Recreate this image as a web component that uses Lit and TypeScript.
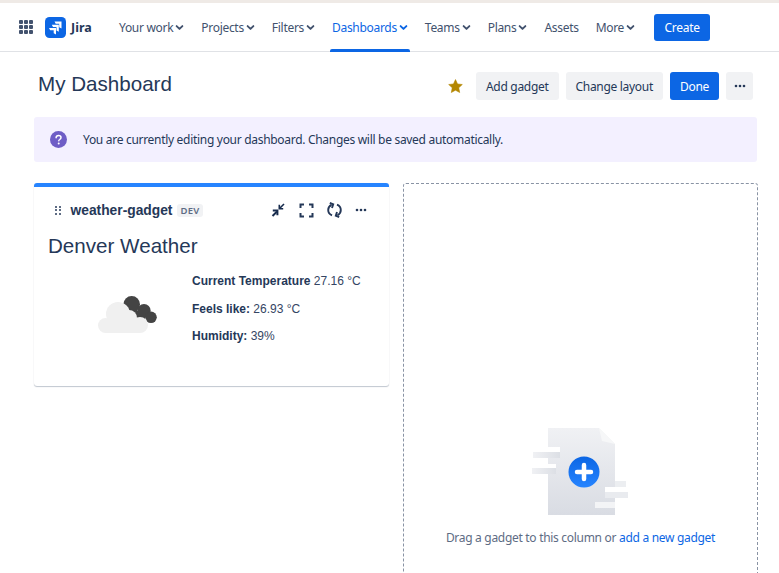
import { LitElement, html, css, svg } from "lit";
import { customElement } from "lit/decorators.js";

const chev = svg`<svg class="chev" width="9" height="9" viewBox="0 0 10 10"><path d="M1.800 3.400 5 6.600l3.200-3.200" fill="none" stroke="currentColor" stroke-width="2.100" stroke-linecap="round" stroke-linejoin="round"/></svg>`;
const dots = svg`<svg width="12" height="4" viewBox="0 0 12 4"><circle cx="2" cy="2" r="1.300" fill="#253858"/><circle cx="6" cy="2" r="1.300" fill="#253858"/><circle cx="10" cy="2" r="1.300" fill="#253858"/></svg>`;

@customElement("app-root")
export class AppRoot extends LitElement {
  static styles = css`
    :host { display: block; height: 573px; overflow: hidden; background: #fff; color: #172b4d; font-family: "Noto Sans", sans-serif; letter-spacing: -0.3px; }
    .strip { height: 3px; background: #efeae6; }
    nav { height: 48px; display: flex; align-items: center; border-bottom: 1px solid #e0e2e6; padding-left: 19px; background: #fff; }
    .apps { display: grid; grid-template-columns: repeat(3, 4px); gap: 1px; width: 14px; margin-right: 12px; }
    .apps i { width: 4px; height: 4px; background: #42526e; border-radius: 1px; }
    .brand { display: flex; align-items: center; gap: 5px; font-size: 12.5px; font-weight: 700; color: #253858; width: 72px; letter-spacing: 0; }
    .links { display: flex; height: 100%; }
    .link { display: flex; align-items: center; gap: 2px; padding: 0 2px; margin-right: 13px; font-size: 12px; color: #42526e; height: 100%; position: relative; white-space: nowrap; }
    .link.on { color: #0c66e4; }
    .link.on::after { content: ""; position: absolute; left: 0; right: 0; bottom: -1px; height: 3px; background: #0c66e4; border-radius: 2px 2px 0 0; }
    .create { background: #0c66e4; color: #fff; font-size: 12px; height: 27px; width: 56px; border-radius: 3px; display: flex; align-items: center; justify-content: center; margin: 1px 0 0 4px; }
    main { padding: 0 22px 0 34px; }
    .head { display: flex; align-items: center; height: 48px; margin: 10px 0 7px; padding-left: 4px; }
    h1 { margin: 0 0 4px; font: 400 20.6px "Liberation Sans", sans-serif; letter-spacing: 0; color: #253858; flex: 1; }
    .actions { display: flex; align-items: center; gap: 7px; padding-right: 4px; }
    .star { margin-right: 6px; display: flex; }
    .btn { height: 28px; padding: 0 10px; background: #f1f2f4; border-radius: 3px; font-size: 12px; color: #253858; display: flex; align-items: center; justify-content: center; white-space: nowrap; }
    .btn.primary { background: #0c66e4; color: #fff; }
    .btn.more { width: 27px; padding: 0; box-sizing: border-box; }
    .banner { height: 45px; background: #f3f0ff; border-radius: 3px; display: flex; align-items: center; gap: 16px; padding-left: 16px; font-size: 12px; color: #253858; }
    .columns { display: grid; grid-template-columns: 355px 355px; gap: 14px; margin-top: 21px; }
    .card { height: 203px; box-sizing: border-box; border-top: 4px solid #2684ff; border-radius: 3px; box-shadow: 0 1px 1px rgba(9,30,66,.25), 0 0 1px rgba(9,30,66,.06); padding: 0 14px; }
    .card-head { display: flex; align-items: center; height: 46px; padding-left: 7px; }
    .grip { display: grid; grid-template-columns: repeat(2, 2px); gap: 1.500px; margin-right: 10px; }
    .grip i { width: 2px; height: 2px; background: #5e6c84; }
    .gname { font: 700 13.800px "Liberation Sans", sans-serif; letter-spacing: 0; color: #253858; }
    .tag { font-size: 9.500px; font-weight: 600; background: #f1f2f4; color: #5e6c84; padding: 0 3px; border-radius: 3px; margin-left: 5px; line-height: 13px; letter-spacing: .3px; }
    .tools { margin-left: auto; display: flex; align-items: center; gap: 13px; padding-right: 8px; }
    .tools svg { display: block; }
    h2 { margin: 0; font: 400 20.600px "Liberation Sans", sans-serif; letter-spacing: 0; color: #253858; line-height: 26px; }
    .body { display: flex; margin-top: 15px; }
    .icon { width: 144px; padding-left: 50px; padding-top: 22px; box-sizing: border-box; }
    .facts { font: 12px "Liberation Sans", sans-serif; letter-spacing: 0; color: #344563; display: flex; flex-direction: column; gap: 13px; line-height: 14.500px; }
    .facts b { color: #253858; }
    .drop { height: 500px; box-sizing: border-box; border: 1px dashed #8993a4; border-radius: 3px; display: flex; flex-direction: column; align-items: center; padding-top: 244px; font-size: 12px; color: #5e6c84; }
    .drop a { color: #0c66e4; }
    .drop p { margin: 13px 0 0; white-space: nowrap; }
    .drop svg { margin-left: -1px; }
  `;

  link(t: string, on = false, c = true) {
    return html`<div class="link ${on ? "on" : ""}">${t}${c ? chev : ""}</div>`;
  }

  render() {
    return html`
      <div class="strip"></div>
      <nav>
        <div class="apps">${Array(9).fill(0).map(() => html`<i></i>`)}</div>
        <div class="brand">
          <svg width="21" height="21" viewBox="0 0 21 21">
            <rect width="21" height="21" rx="4.500" fill="#0c66e4"/>
            <path d="M9.500 4.500h7v7l-2.300-1.200V6.800H10.700z" fill="#fff"/>
            <path d="M6.800 7.800h7v6.900l-2.300-1.200V10.100H8z" fill="#fff"/>
            <path d="M4 11h7v6.500L8.700 16.300v-3H5.200z" fill="#fff"/>
          </svg>
          <span>Jira</span>
        </div>
        <div class="links">
          ${this.link("Your work")}${this.link("Projects")}${this.link("Filters")}${this.link("Dashboards", true)}${this.link("Teams")}${this.link("Plans")}${this.link("Assets", false, false)}${this.link("More")}
        </div>
        <div class="create">Create</div>
      </nav>
      <main>
        <div class="head">
          <h1>My Dashboard</h1>
          <div class="actions">
            <span class="star"><svg width="15" height="14" viewBox="0 0 16 15"><path d="M8 .6l2.200 4.700 5.100.6-3.800 3.500 1 5.100L8 12l-4.500 2.500 1-5.100L.7 5.900l5.100-.6z" fill="#b38600" stroke="#b38600" stroke-width=".6" stroke-linejoin="round"/></svg></span>
            <div class="btn">Add gadget</div>
            <div class="btn">Change layout</div>
            <div class="btn primary">Done</div>
            <div class="btn more">${dots}</div>
          </div>
        </div>
        <div class="banner">
          <svg width="17" height="17" viewBox="0 0 17 17"><circle cx="8.500" cy="8.500" r="8.500" fill="#6e5dc6"/><path d="M6.100 6.700c0-1.400 1.100-2.300 2.500-2.300s2.400.9 2.400 2.100c0 1-.6 1.500-1.300 2-.6.4-.9.7-.9 1.300" fill="none" stroke="#fff" stroke-width="1.500" stroke-linecap="round"/><circle cx="8.700" cy="12.400" r="1" fill="#fff"/></svg>
          <span>You are currently editing your dashboard. Changes will be saved automatically.</span>
        </div>
        <div class="columns">
          <section class="card">
            <div class="card-head">
              <div class="grip">${Array(6).fill(0).map(() => html`<i></i>`)}</div>
              <span class="gname">weather-gadget</span>
              <span class="tag">DEV</span>
              <div class="tools">
                <svg width="16" height="16" viewBox="0 0 16 16" fill="none" stroke="#172b4d"><path d="M14 2 10 6" stroke-width="1.600"/><path d="M9.300 2.800v3.900h3.900" stroke-width="1.600"/><path d="M7 9.500 2.500 14" stroke-width="2"/><path d="M2.800 8.600h4.600v4.600" stroke-width="2"/></svg>
                <svg width="15" height="15" viewBox="0 0 15 15" fill="none" stroke="#253858" stroke-width="2"><path d="M1.500 5V1.500H5M10 1.500h3.500V5M13.500 10v3.500H10M5 13.500H1.500V10"/></svg>
                <svg width="15" height="16" viewBox="0 0 15 16" fill="none" stroke="#253858" stroke-width="1.900"><path d="M5 13.300C2.600 12.300 1.200 10.300 1.200 8c0-2.300 1.300-4.200 3.300-5.200"/><path d="M2.800 1 6.200 2.400 5 6"/><path d="M10 2.700c2.400 1 3.800 3 3.800 5.300 0 2.300-1.300 4.200-3.300 5.200"/><path d="M12.200 15 8.800 13.600 10 10"/></svg>
                ${dots}
              </div>
            </div>
            <h2>Denver Weather</h2>
            <div class="body">
              <div class="icon">
                <svg width="60" height="39" viewBox="98 297 60 39">
                  <g fill="#444">
                    <circle cx="131.700" cy="305.300" r="8.300"/>
                    <circle cx="144" cy="311.700" r="6.700"/>
                    <circle cx="151" cy="318.300" r="5.800"/>
                    <path d="M131 312h14v12h-14z"/>
                  </g>
                  <g fill="#f0f0f0" stroke="#fff" stroke-width="0">
                    <circle cx="118" cy="315" r="12"/>
                    <circle cx="105.500" cy="326.500" r="7.500"/>
                    <circle cx="140" cy="326" r="8"/>
                    <circle cx="129" cy="319" r="8"/>
                    <path d="M105 322h35v12h-35z"/>
                  </g>
                </svg>
              </div>
              <div class="facts">
                <div><b>Current Temperature</b> 27.16 °C</div>
                <div><b>Feels like:</b> 26.93 °C</div>
                <div><b>Humidity:</b> 39%</div>
              </div>
            </div>
          </section>
          <section class="drop">
            <svg width="97" height="88" viewBox="0 0 97 88">
              <defs>
                <linearGradient id="pg" x1="0" y1="0" x2="0" y2="1"><stop offset="0" stop-color="#f0f1f4"/><stop offset="1" stop-color="#d9dce3"/></linearGradient>
                <linearGradient id="bar" x1="0" y1="0" x2="1" y2="0"><stop offset="0" stop-color="#f0f1f4"/><stop offset="1" stop-color="#dcdfe5"/></linearGradient>
                <linearGradient id="bl" x1="0" y1="0" x2="0" y2="1"><stop offset="0" stop-color="#0c66e4"/><stop offset="1" stop-color="#2684ff"/></linearGradient>
              </defs>
              <path d="M16 0h51l16 16v71H16z" fill="url(#pg)"/>
              <path d="M67 0l16 16-13-3z" fill="#f6f7f8"/>
              <rect x="16" y="19" width="12" height="5" fill="#fff"/>
              <rect x="1" y="24" width="27" height="6" fill="url(#bar)"/>
              <rect x="16" y="36" width="8" height="4" fill="#fff"/>
              <rect x="0" y="40" width="24" height="6" fill="url(#bar)"/>
              <rect x="83" y="53" width="11" height="6" fill="#eceef1"/>
              <rect x="73" y="59" width="10" height="5" fill="#fff"/>
              <rect x="73" y="64" width="23" height="6" fill="#e9ebef"/>
              <rect x="63" y="74" width="20" height="6" fill="#f3f4f6"/>
              <circle cx="52" cy="44" r="15.500" fill="url(#bl)"/>
              <path d="M52 37v14M45 44h14" stroke="#fff" stroke-width="4.500" stroke-linecap="round"/>
            </svg>
            <p>Drag a gadget to this column or <a>add a new gadget</a></p>
          </section>
        </div>
      </main>
    `;
  }
}
